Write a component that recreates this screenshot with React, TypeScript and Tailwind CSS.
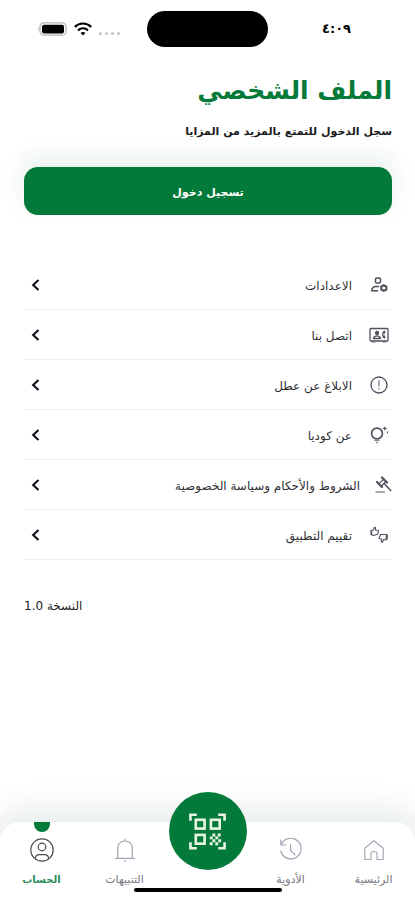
import type { ReactNode } from 'react';

type MenuItem = {
  label: string;
  icon: ReactNode;
  wide?: boolean;
};

const stroke = {
  fill: 'none',
  stroke: 'currentColor',
  strokeLinecap: 'round',
  strokeLinejoin: 'round',
} as const;

function SettingsIcon() {
  return (
    <svg width="20" height="20" viewBox="0 0 20 20" strokeWidth="1.5" {...stroke}>
      <rect x="6.5" y="3" width="5" height="5" rx="1.2" />
      <path d="M9.500 11.500H7C4.500 11.500 3 13.500 2.500 15.800h6" />
      <circle cx="14.800" cy="13" r="2.600" strokeWidth="2" />
      <path d="M14.800 9.300v.5M14.800 16.200v.5M11.500 11.100l.5.3M17.600 14.600l.5.3M11.500 14.900l.5-.3M17.600 11.400l.5-.3" strokeWidth="1" />
    </svg>
  );
}

function ContactIcon() {
  return (
    <svg width="20" height="20" viewBox="0 0 20 20" strokeWidth="1.3" {...stroke}>
      <rect x="1" y="3.5" width="18" height="12.5" rx="1" />
      <circle cx="8" cy="8" r="1.5" fill="currentColor" />
      <path d="M4.5 13.5c.5-2 2-2.700 3.500-2.700s3 .7 3.500 2.700z" />
      <path d="M15.800 6.500c-1.600 0-2 1.300-2 3s.6 3.300 2 3.300M15.500 6.500v1.800M15.500 11v1.800" />
      <path d="M3 17h3M14 17h3" strokeWidth="0.8" />
    </svg>
  );
}

function AlertIcon() {
  return (
    <svg width="20" height="20" viewBox="0 0 20 20" strokeWidth="1.3" {...stroke}>
      <circle cx="10" cy="10" r="8" />
      <path d="M10 5.800v5.200M10 13.800v.2" stroke="#85858f" strokeWidth="1.4" />
    </svg>
  );
}

function BulbIcon() {
  return (
    <svg width="20" height="20" viewBox="0 0 20 20" {...stroke}>
      <circle cx="8" cy="8.5" r="5.400" strokeWidth="1.7" />
      <path d="M6 15.200h4M7.500 17.500h1" stroke="#85858f" strokeWidth="1.5" />
      <path d="M15.800 2v3M14.300 3.500h3M18.500 6.800v1" strokeWidth="1.2" />
    </svg>
  );
}

function GavelIcon() {
  return (
    <svg width="18" height="20" viewBox="0 0 18 20" {...stroke}>
      <path d="M8 2.500l5 5M3 7l5 5" strokeWidth="2.2" />
      <path d="M9.200 4.700L5.700 8.200M11.500 7L8 10.500" strokeWidth="1.2" />
      <path d="M10 8.500l6.800 7" strokeWidth="1.5" />
      <path d="M2 17h8.500" strokeWidth="1.200" />
    </svg>
  );
}

function RateIcon() {
  return (
    <svg width="20" height="20" viewBox="0 0 20 20" strokeWidth="1.1" {...stroke}>
      <path d="M2.500 5.500l2-.5 1-2.800 1 .5V5l3 .3-.8 4-4.500 1.200-1.700-1z" />
      <path d="M17.500 9.500l-.5 5.500-2.500-.5-1 2.800-1.200-.6.200-2.700-2.500-.5 1.500-4z" />
      <path d="M2.300 5.500v4M18 10v4" strokeWidth="1.6" />
    </svg>
  );
}

function HomeIcon() {
  return (
    <svg width="24" height="24" viewBox="0 0 24 24" strokeWidth="1.1" {...stroke}>
      <path d="M2.800 10.200L12 2.800l9.200 7.400v11.300H15v-6.300c0-.8-.6-1.500-1.500-1.500h-3c-.9 0-1.500.7-1.500 1.500v6.300H2.800z" />
    </svg>
  );
}

function HistoryIcon() {
  return (
    <svg width="24" height="24" viewBox="0 0 24 24" strokeWidth="1.2" {...stroke}>
      <path d="M2.500 6.200A10.300 10.300 0 1 1 1.800 13" />
      <path d="M1.800 2v5h5" />
      <path d="M11.500 6.500v6l4.500 4" />
    </svg>
  );
}

function BellIcon() {
  return (
    <svg width="24" height="24" viewBox="0 0 24 24" strokeWidth="1.2" {...stroke}>
      <path d="M4.800 20V9.800C4.800 5.800 8 3 12 3s7.200 2.800 7.200 6.800V20" />
      <path d="M2.500 20.300h19M11 23h2M12 1v1.500" />
    </svg>
  );
}

function AccountIcon() {
  return (
    <svg width="24" height="24" viewBox="0 0 24 24" strokeWidth="1.2" {...stroke}>
      <circle cx="12" cy="12" r="11.200" />
      <circle cx="12" cy="9" r="3.8" />
      <path d="M5.500 20c.3-2.300 1.500-3.300 3.500-3.300h6c2 0 3.200 1 3.500 3.300" />
    </svg>
  );
}

function QrIcon() {
  return (
    <svg width="39" height="39" viewBox="0 0 40 40" fill="none" stroke="currentColor" strokeWidth="2.7">
      <path d="M2.500 9V2.800H9M31 2.800h6.500V9M37.500 31v6.200H31M9 37.200H2.500V31" />
      <rect x="8" y="8" width="9" height="9" />
      <rect x="23.500" y="8" width="9" height="9" />
      <rect x="8" y="23.500" width="9" height="9" />
      <path
        d="M25 22h3v3h-3zM30.500 22h3v3h-3zM22.300 25h3v3h-3zM28 25h3v3h-3zM25 28h3v3h-3zM31 28h3v3h-3zM22.300 31h3v3h-3zM28 31h3v3h-3z"
        fill="currentColor"
        stroke="none"
      />
    </svg>
  );
}

const menuItems: MenuItem[] = [
  { label: 'الاعدادات', icon: <SettingsIcon /> },
  { label: 'اتصل بنا', icon: <ContactIcon /> },
  { label: 'الابلاغ عن عطل', icon: <AlertIcon /> },
  { label: 'عن كوديا', icon: <BulbIcon /> },
  { label: 'الشروط والأحكام وسياسة الخصوصية', icon: <GavelIcon />, wide: true },
  { label: 'تقييم التطبيق', icon: <RateIcon /> },
];

function StatusBar() {
  return (
    <div dir="ltr" className="grid grid-cols-[1fr_auto_1fr] items-center pt-[11px]">
      <div className="flex items-center gap-[7px] pl-[37px]">
        <svg width="30" height="14" viewBox="0 0 30 14">
          <rect x="3" y="0.8" width="26" height="12.4" rx="4" fill="none" stroke="#b5b5b5" strokeWidth="1.3" />
          <path d="M1.500 5v4C.4 8.500.4 5.500 1.500 5z" fill="#b5b5b5" />
          <rect x="5" y="2.700" width="22" height="8.800" rx="2" fill="#000" />
        </svg>
        <svg width="18" height="14" viewBox="0 0 18 14" fill="none" stroke="#000" strokeWidth="2.1">
          <path d="M.8 5C5.400.4 12.600.4 17.200 5" />
          <path d="M4 8.400c2.800-2.800 7.200-2.800 10 0" />
          <path d="M9 13.400l-2.400-2.500c1.300-1.200 3.500-1.200 4.800 0z" fill="#000" stroke="none" />
        </svg>
        <div className="flex gap-[3px] pt-2">
          <span className="size-[3px] rounded-full bg-[#c4c4c4]" />
          <span className="size-[3px] rounded-full bg-[#c4c4c4]" />
          <span className="size-[3px] rounded-full bg-[#c4c4c4]" />
          <span className="size-[3px] rounded-full bg-[#c4c4c4]" />
        </div>
      </div>
      <div className="h-9 w-[121px] rounded-full bg-black" />
      <div className="pl-[54px] text-[13px] font-bold text-black">٤:٠٩</div>
    </div>
  );
}

function MenuRow({ label, icon, wide }: MenuItem) {
  return (
    <li className="border-b border-[#eceeef]">
      <a
        href="#"
        className={`flex h-[49px] items-center text-[#2f2f33] ${wide ? 'gap-[14px]' : 'gap-[17px] pr-[3px]'}`}
      >
        <span className="shrink-0 text-[#50505f]">{icon}</span>
        <span className="flex-1 whitespace-nowrap pt-[3px] text-[12px]">{label}</span>
        <svg className="ml-[7px]" width="9" height="12" viewBox="0 0 9 12" fill="none" stroke="#15151f" strokeWidth="2.2">
          <path d="M7.500 1L2.200 6l5.300 5" />
        </svg>
      </a>
    </li>
  );
}

function NavTab({ label, icon, active }: { label: string; icon: ReactNode; active?: boolean }) {
  return (
    <button type="button" className="flex flex-col items-center">
      <span className={`h-[10px] w-4 rounded-b-full ${active ? 'bg-[#047a3a]' : ''}`} />
      <span className={`mt-[6px] ${active ? 'text-[#4a4a50]' : 'text-[#a3a3b3]'}`}>{icon}</span>
      <span
        className={`mt-[10px] whitespace-nowrap leading-4 ${active ? 'text-[10px] font-bold text-[#2a8c5a]' : 'text-[11px] text-[#77777f]'}`}
      >
        {label}
      </span>
    </button>
  );
}

function BottomNav() {
  return (
    <nav className="relative mt-auto rounded-t-[20px] bg-white shadow-[0_-8px_30px_6px_rgba(40,80,80,0.10)]">
      <div className="grid h-[78px] grid-cols-5 items-start">
        <NavTab label="الرئيسية" icon={<HomeIcon />} />
        <NavTab label="الأدوية" icon={<HistoryIcon />} />
        <button
          type="button"
          aria-label="مسح الرمز"
          className="-mt-[30px] flex size-[78px] items-center justify-center justify-self-center rounded-full bg-[#047a3a] text-[#e6f5e6]"
        >
          <QrIcon />
        </button>
        <NavTab label="التنبيهات" icon={<BellIcon />} />
        <NavTab label="الحساب" icon={<AccountIcon />} active />
      </div>
      <div className="absolute bottom-2 left-1/2 h-1 w-[148px] -translate-x-1/2 rounded-full bg-black" />
    </nav>
  );
}

export default function App() {
  return (
    <div
      dir="rtl"
      className="flex min-h-screen flex-col overflow-hidden bg-white font-['DejaVu_Sans',sans-serif]"
    >
      <StatusBar />
      <main className="pr-[23px] pl-6">
        <header className="pt-6">
          <h1 className="text-[25px] leading-10 font-bold text-[#047a3a]">الملف الشخصي</h1>
          <p className="mt-[11px] text-[11px] leading-5 font-bold text-[#1c1c1c]">
            سجل الدخول للتمتع بالمزيد من المزايا
          </p>
        </header>
        <button
          type="button"
          className="mt-[25px] h-12 w-full rounded-[14px] bg-[#047a3a] pt-1 text-[11px] font-bold text-white shadow-[0_-10px_20px_4px_rgba(40,110,90,0.08)]"
        >
          تسجيل دخول
        </button>
        <ul className="mt-[45px]">
          {menuItems.map((item) => (
            <MenuRow key={item.label} {...item} />
          ))}
        </ul>
        <p className="mt-9 text-left text-[12px] leading-5 text-[#222]">النسخة 1.0</p>
      </main>
      <BottomNav />
    </div>
  );
}
